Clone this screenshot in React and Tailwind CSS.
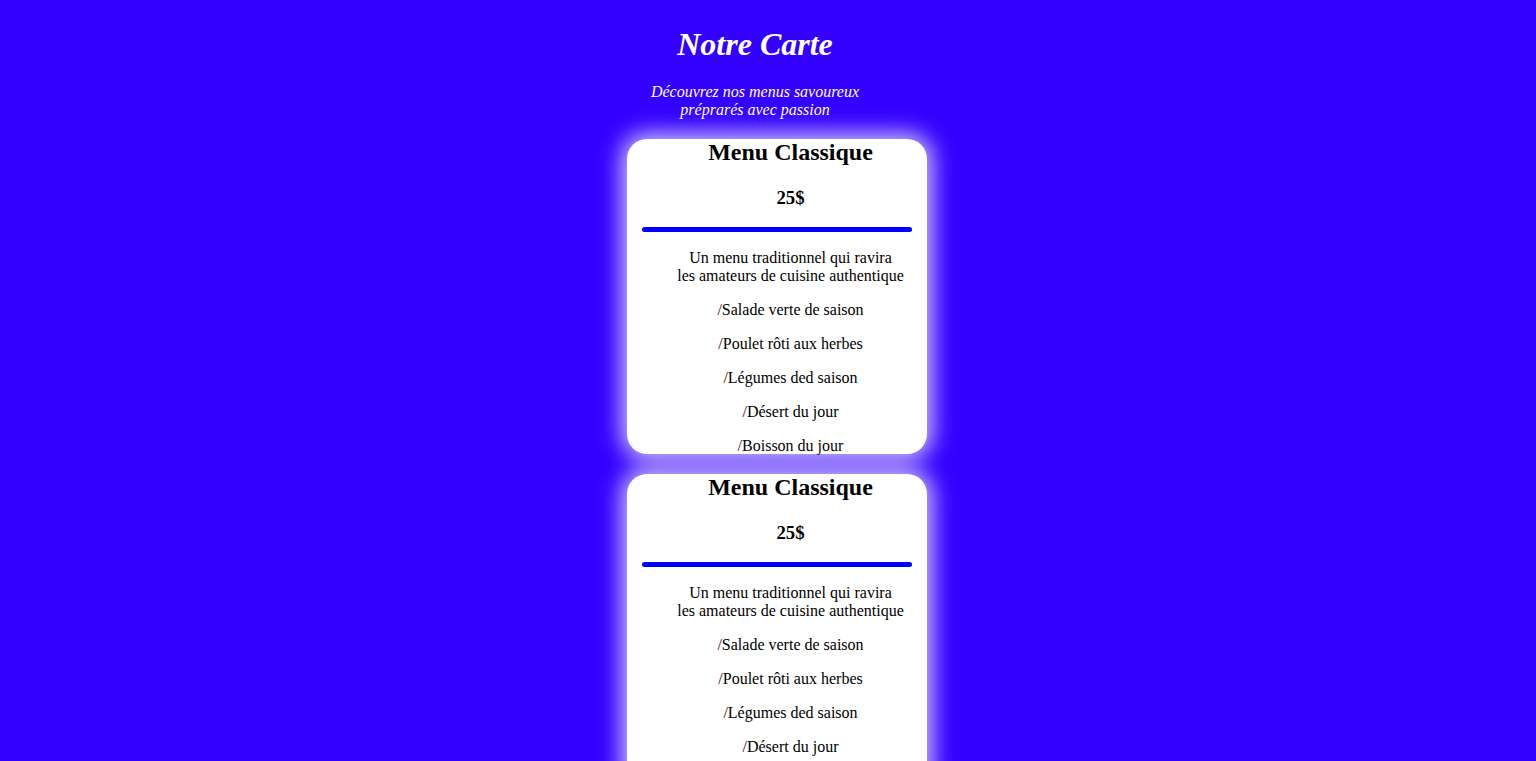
const plats = [
  "Salade verte de saison",
  "Poulet rôti aux herbes",
  "Légumes ded saison",
  "Désert du jour",
  "Boisson du jour",
];

function CarteMenu() {
  return (
    <div className="w-[300px] h-[315px] bg-white rounded-[20px] px-[15px] shadow-[0_0_22px_6px_rgba(255,255,255,0.75)] text-black text-center">
      <h2 className="pl-[27px] text-[24px] leading-[27px] font-bold">Menu Classique</h2>
      <h3 className="pl-[27px] mt-[21px] text-[18.72px] leading-[21px] font-bold">25$</h3>
      <div className="mt-[19px] h-[5px] rounded-full bg-[#0000ff]" />
      <div className="pl-[27px] text-[16px] leading-[18px]">
        <p className="mt-[17px]">
          Un menu traditionnel qui ravira
          <br />
          les amateurs de cuisine authentique
        </p>
        {plats.map((plat) => (
          <p key={plat} className="mt-[16px]">
            <span className="text-[#3a0a0a]">/</span>
            {plat}
          </p>
        ))}
      </div>
    </div>
  );
}

export default function App() {
  return (
    <div
      className="min-h-screen bg-[#3300ff] pb-[20px]"
      style={{ fontFamily: '"Liberation Serif", "Times New Roman", serif' }}
    >
      <div className="mx-auto w-[322px] flex flex-col">
        <div className="w-[296px] text-white text-center italic">
          <h1 className="pt-[26px] text-[32px] leading-[37px] font-bold">Notre Carte</h1>
          <p className="mt-[20px] text-[16px] leading-[18px]">
            Découvrez nos menus savoureux
            <br />
            préprarés avec passion
          </p>
        </div>
        <div className="mt-[20px] ml-[20px] flex flex-col gap-[20px]">
          <CarteMenu />
          <CarteMenu />
        </div>
      </div>
    </div>
  );
}
